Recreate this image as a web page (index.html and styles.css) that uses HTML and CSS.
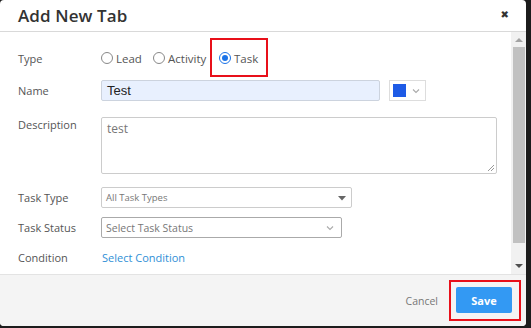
FILE: index.html
```html
<!DOCTYPE html>
<html>
<head>
<meta charset="utf-8">
<link rel="stylesheet" href="styles.css">
</head>
<body>
<div class="dialog">
  <div class="header">
    <div class="title">Add New Tab</div>
    <div class="close">&#x2716;</div>
  </div>
  <div class="main">
    <div class="body">
      <div class="row row-type">
        <div class="label">Type</div>
        <div class="radios">
          <span class="radio r-lead"><span class="circle"></span>Lead</span>
          <span class="radio r-act"><span class="circle"></span>Activity</span>
          <span class="radio"><span class="circle checked"></span>Task</span>
        </div>
        <div class="hl hl-task"></div>
      </div>
      <div class="row row-name">
        <div class="label">Name</div>
        <div class="input name-input">Test</div>
        <div class="color-pick">
          <span class="swatch"></span>
          <svg class="chev" width="8" height="6" viewBox="0 0 8 6"><path d="M1 1.5 L4 4.5 L7 1.5" fill="none" stroke="#aaa" stroke-width="1.1"/></svg>
        </div>
      </div>
      <div class="row row-desc">
        <div class="label">Description</div>
        <div class="textarea">test
          <svg class="grip" width="9" height="9" viewBox="0 0 9 9"><path d="M8 2 L2 8 M8 5 L5 8" stroke="#999" stroke-width="1"/></svg>
        </div>
      </div>
      <div class="row row-ttype">
        <div class="label">Task Type</div>
        <div class="select sel-type">All Task Types
          <svg class="caret" width="8" height="5" viewBox="0 0 8 5"><path d="M0 0 H8 L4 4.5 Z" fill="#666"/></svg>
        </div>
      </div>
      <div class="row row-tstatus">
        <div class="label">Task Status</div>
        <div class="select sel-status">Select Task Status
          <svg class="chev2" width="8" height="6" viewBox="0 0 8 6"><path d="M1 1.5 L4 4.5 L7 1.5" fill="none" stroke="#aaa" stroke-width="1.1"/></svg>
        </div>
      </div>
      <div class="row row-cond">
        <div class="label">Condition</div>
        <a class="link">Select Condition</a>
      </div>
    </div>
    <div class="scrollbar">
      <div class="arrow up"></div>
      <div class="thumb"></div>
      <div class="arrow down"></div>
    </div>
  </div>
  <div class="footer">
    <span class="cancel">Cancel</span>
    <span class="save-wrap"><span class="save">Save</span></span>
  </div>
</div>
</body>
</html>
```
FILE: styles.css
```css
html, body {
  margin: 0;
  padding: 0;
  background: #1c1c1c;
  width: 531px;
  height: 328px;
  overflow: hidden;
  font-family: "Open Sans", "Noto Sans", sans-serif;
}
.dialog {
  width: 526px;
  height: 326px;
  background: #fff;
  border-radius: 4px;
  display: flex;
  flex-direction: column;
  overflow: hidden;
}
.header {
  border-bottom: 1px solid #d9d9d9;
  display: flex;
  align-items: center;
  justify-content: space-between;
  padding: 0 17px 0 18px;
  box-sizing: border-box;
  flex: none;
  height: 32px;
}
.title {
  font-size: 17px;
  font-weight: 600;
  color: #333;
  letter-spacing: 0.1px;
  margin-top: -1px;
}
.close {
  font-size: 10px;
  color: #333;
  font-family: "DejaVu Sans", sans-serif;
  margin-top: -2px;
}
.main {
  height: 242px;
  display: flex;
  flex: none;
}
.body {
  flex: 1;
  position: relative;
  padding: 17px 0 0 18px;
  box-sizing: border-box;
}
.row {
  display: flex;
  align-items: center;
  position: relative;
}
.label {
  width: 83px;
  flex: none;
  font-size: 11px;
  color: #555;
}
.row-type { height: 18px; }
.radios { display: flex; align-items: center; font-size: 11.5px; color: #555; }
.radio { display: inline-flex; align-items: center; flex: none; }
.r-lead { width: 52px; }
.r-act { width: 66px; }
.circle {
  width: 12px;
  height: 12px;
  border: 1px solid #888;
  border-radius: 50%;
  margin-right: 3px;
  box-sizing: border-box;
  background: #fff;
  position: relative;
  flex: none;
}
.circle.checked { border-color: #1a73e8; }
.circle.checked::after {
  content: "";
  position: absolute;
  left: 2px; top: 2px;
  width: 6px; height: 6px;
  border-radius: 50%;
  background: #1a73e8;
}
.hl {
  position: absolute;
  border: 2px solid #e8101a;
  box-sizing: border-box;
}
.hl-task { left: 192px; top: -11px; width: 58px; height: 39px; }
.row-name { margin-top: 13px; }
.input {
  height: 21px;
  box-sizing: border-box;
}
.name-input {
  width: 279px;
  background: #e8f0fe;
  border: 1px solid #ccd3de;
  border-radius: 2px;
  font-family: "Liberation Sans", Arial, sans-serif;
  font-size: 13px;
  color: #222;
  padding: 2px 5px;
  line-height: 15px;
}
.color-pick {
  margin-left: 9px;
  width: 37px;
  height: 21px;
  border: 1px solid #ddd;
  box-sizing: border-box;
  display: flex;
  align-items: center;
  padding-left: 3px;
}
.swatch { width: 13px; height: 13px; background: #1e5be6; }
.chev { margin-left: 6px; }
.row-desc { margin-top: 16px; align-items: flex-start; }
.textarea {
  width: 396px;
  height: 57px;
  border: 1px solid #ccc;
  border-radius: 2px;
  box-sizing: border-box;
  padding: 3px 5px;
  font-size: 12px;
  color: #777;
  position: relative;
  line-height: 16px;
}
.grip { position: absolute; right: 1px; bottom: 1px; }
.row-ttype { margin-top: 13px; }
.select {
  height: 21px;
  border: 1px solid #ccc;
  border-radius: 2px;
  box-sizing: border-box;
  display: flex;
  align-items: center;
  padding-left: 4px;
  color: #777;
  position: relative;
}
.sel-type { width: 251px; font-size: 9.5px; }
.caret { position: absolute; right: 5px; top: 8px; }
.row-tstatus { margin-top: 9px; }
.sel-status { width: 241px; font-size: 10.5px; border-color: #aaa; }
.chev2 { position: absolute; right: 7px; top: 7px; }
.row-cond { margin-top: 12px; }
.link { font-size: 11px; color: #2f8fd6; margin-left: 1px; }
.scrollbar {
  width: 15px;
  flex: none;
  background: #f1f1f1;
  display: flex;
  flex-direction: column;
  align-items: center;
}
.arrow { width: 0; height: 0; border-left: 4px solid transparent; border-right: 4px solid transparent; }
.arrow.up { border-bottom: 4px solid #a3a3a3; margin-top: 6px; margin-bottom: 5px; }
.thumb { width: 12px; height: 196px; background: #c1c1c1; }
.arrow.down { border-top: 4px solid #505050; margin-top: 21px; }
.footer {
  flex: 1;
  background: #f4f4f4;
  border-top: 1px solid #e3e3e3;
  display: flex;
  align-items: center;
  justify-content: flex-end;
  padding-right: 5px;
}
.cancel { font-size: 10.5px; color: #777; margin-right: 11px; }
.save-wrap {
  border: 2px solid #e8101a;
  padding: 5px 7px 6px 5px;
}
.save {
  display: flex;
  align-items: center;
  justify-content: center;
  width: 56px;
  height: 26px;
  background: #3399f3;
  color: #fff;
  font-size: 11px;
  font-weight: 700;
  border-radius: 2px;
}
```
